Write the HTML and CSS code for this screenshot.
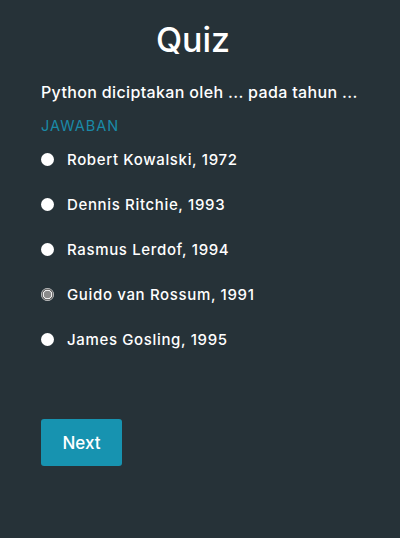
FILE: index.html
```html
<!DOCTYPE html>
<html lang="id">
<head>
<meta charset="utf-8">
<title>Quiz</title>
<link rel="stylesheet" href="styles.css">
</head>
<body>
<main class="quiz">
  <h1 class="quiz-title">Quiz</h1>
  <p class="question">Python diciptakan oleh ... pada tahun ...</p>
  <p class="label">JAWABAN</p>
  <ul class="options">
    <li class="option"><span class="radio"></span><span class="option-text">Robert Kowalski, 1972</span></li>
    <li class="option"><span class="radio"></span><span class="option-text">Dennis Ritchie, 1993</span></li>
    <li class="option"><span class="radio"></span><span class="option-text">Rasmus Lerdof, 1994</span></li>
    <li class="option"><span class="radio radio-hover"></span><span class="option-text">Guido van Rossum, 1991</span></li>
    <li class="option"><span class="radio"></span><span class="option-text">James Gosling, 1995</span></li>
  </ul>
  <button class="next-btn" type="button">Next</button>
</main>
</body>
</html>
```
FILE: styles.css
```css
* { box-sizing: border-box; }
html, body {
  margin: 0;
  padding: 0;
  background: #263238;
  height: 100%;
}
body {
  font-family: Inter, "Open Sans", "Liberation Sans", sans-serif;
  color: #ffffff;
}
.quiz {
  padding: 18px 55px 0 41px;
  display: flex;
  flex-direction: column;
}
.quiz-title {
  margin: 0;
  font-size: 34px;
  font-weight: 500;
  text-align: center;
  line-height: 44px;
}
.question {
  margin: 20px 0 0;
  font-size: 16px;
  font-weight: 500;
  line-height: 20px;
  letter-spacing: 0.35px;
  white-space: nowrap;
}
.label {
  margin: 15px 0 0;
  font-size: 14.5px;
  color: #1a8aa8;
  line-height: 18px;
  letter-spacing: 1px;
}
.options {
  list-style: none;
  margin: 14px 0 0;
  padding: 0;
  display: flex;
  flex-direction: column;
  gap: 25px;
}
.option {
  display: flex;
  align-items: center;
  gap: 13px;
  height: 20px;
  font-size: 15px;
  font-weight: 500;
  letter-spacing: 0.65px;
}
.radio {
  width: 13px;
  height: 13px;
  border-radius: 50%;
  background: #ffffff;
  flex: none;
}
.radio-hover {
  background: radial-gradient(circle, #8a8a8a 0 3.5px, #ececec 4px 4.5px, #6f6f6f 5px 5.6px, #e0e0e0 6.2px);
}
.next-btn {
  align-self: flex-start;
  margin-top: 70px;
  width: 81px;
  height: 47px;
  border: none;
  border-radius: 3px;
  background: #1793b0;
  color: #ffffff;
  font-family: inherit;
  font-size: 17px;
  font-weight: 500;
}
```
